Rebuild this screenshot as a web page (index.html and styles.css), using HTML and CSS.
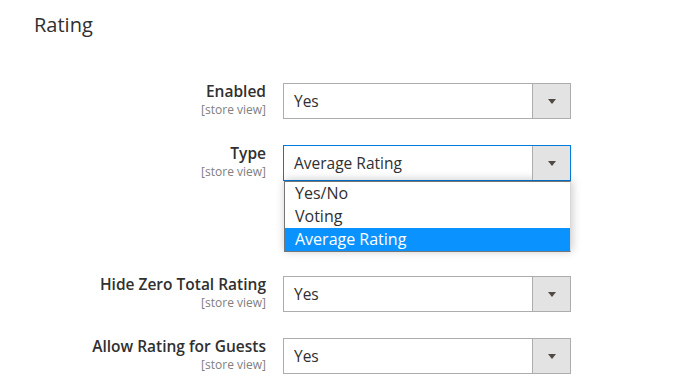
FILE: index.html
```html
<!DOCTYPE html>
<html lang="en">
<head>
<meta charset="utf-8"/>
<meta content="width=device-width, initial-scale=1.0" name="viewport"/>
<title>Rating - Configuration</title>
<link rel="stylesheet" href="styles.css">
</head>
<body>
<div class="section">
<h1 class="section-title">Rating</h1>

<!-- Campos -->
<div class="fields">
<div class="field">
<div class="field-label">
<span class="label-text">Enabled</span>
<span class="scope">[store view]</span>
</div>
<div class="control">
<div class="select">
<span class="select-value">Yes</span>
<span class="select-arrow"></span>
</div>
</div>
</div>

<div class="field">
<div class="field-label">
<span class="label-text">Type</span>
<span class="scope">[store view]</span>
</div>
<div class="control">
<div class="select select-open">
<span class="select-value">Average Rating</span>
<span class="select-arrow"></span>
</div>
<ul class="options">
<li>Yes/No</li>
<li>Voting</li>
<li class="selected">Average Rating</li>
</ul>
</div>
</div>

<div class="field">
<div class="field-label">
<span class="label-text">Hide Zero Total Rating</span>
<span class="scope">[store view]</span>
</div>
<div class="control">
<div class="select">
<span class="select-value">Yes</span>
<span class="select-arrow"></span>
</div>
</div>
</div>

<div class="field">
<div class="field-label">
<span class="label-text">Allow Rating for Guests</span>
<span class="scope">[store view]</span>
</div>
<div class="control">
<div class="select">
<span class="select-value">Yes</span>
<span class="select-arrow"></span>
</div>
</div>
</div>
</div>
</div>
</body>
</html>
```

FILE: styles.css
```css
:root {
  --color-texto: #303030;
  --color-borde: #adadad;
  --color-foco: #007bdb;
  --color-flecha: #514943;
  --color-marcado: #0a93ff;
}

* {
  box-sizing: border-box;
  font-family: 'Open Sans', sans-serif;
}

body {
  margin: 0;
  background: #fff;
  color: var(--color-texto);
}

.section {
  padding: 11px 0 0 34px;
}

.section-title {
  margin: 0;
  font-size: 20px;
  font-weight: 400;
  line-height: 27px;
}

.fields {
  display: flex;
  flex-direction: column;
  gap: 26px;
  margin-top: 45px;
  margin-left: -34px;
}

.field {
  display: grid;
  grid-template-columns: 266px 288px;
  column-gap: 17px;
}

.field-label {
  display: flex;
  flex-direction: column;
  align-items: flex-end;
  text-align: right;
  margin-top: -2px;
}

.label-text {
  font-size: 15.5px;
  font-weight: 600;
  line-height: 21px;
}

.scope {
  font-size: 12px;
  line-height: 16px;
  color: #808080;
}

.select {
  display: flex;
  height: 36px;
  border: 1px solid var(--color-borde);
  background: #fff;
}

.select-value {
  flex: 1;
  padding-left: 10px;
  font-size: 15.5px;
  line-height: 34px;
}

.select-arrow {
  width: 38px;
  display: flex;
  align-items: center;
  justify-content: center;
  background: #e3e3e3;
  border-left: 1px solid var(--color-borde);
}

.select-arrow::after {
  content: '';
  border-top: 5px solid var(--color-flecha);
  border-left: 4.5px solid transparent;
  border-right: 4.5px solid transparent;
  margin-top: 1px;
}

.select-open {
  border-color: var(--color-foco);
}

.options {
  list-style: none;
  margin: 0 0 -2px 1px;
  padding: 0;
  border: 1px solid #767676;
  border-right-color: #d8d8d8;
  background: #fff;
  box-shadow: 1px -1px 9px rgba(0, 0, 0, 0.22);
}

.options li {
  padding-left: 10px;
  font-size: 16px;
  line-height: 23px;
}

.options .selected {
  background: var(--color-marcado);
  color: #fff;
}
```
